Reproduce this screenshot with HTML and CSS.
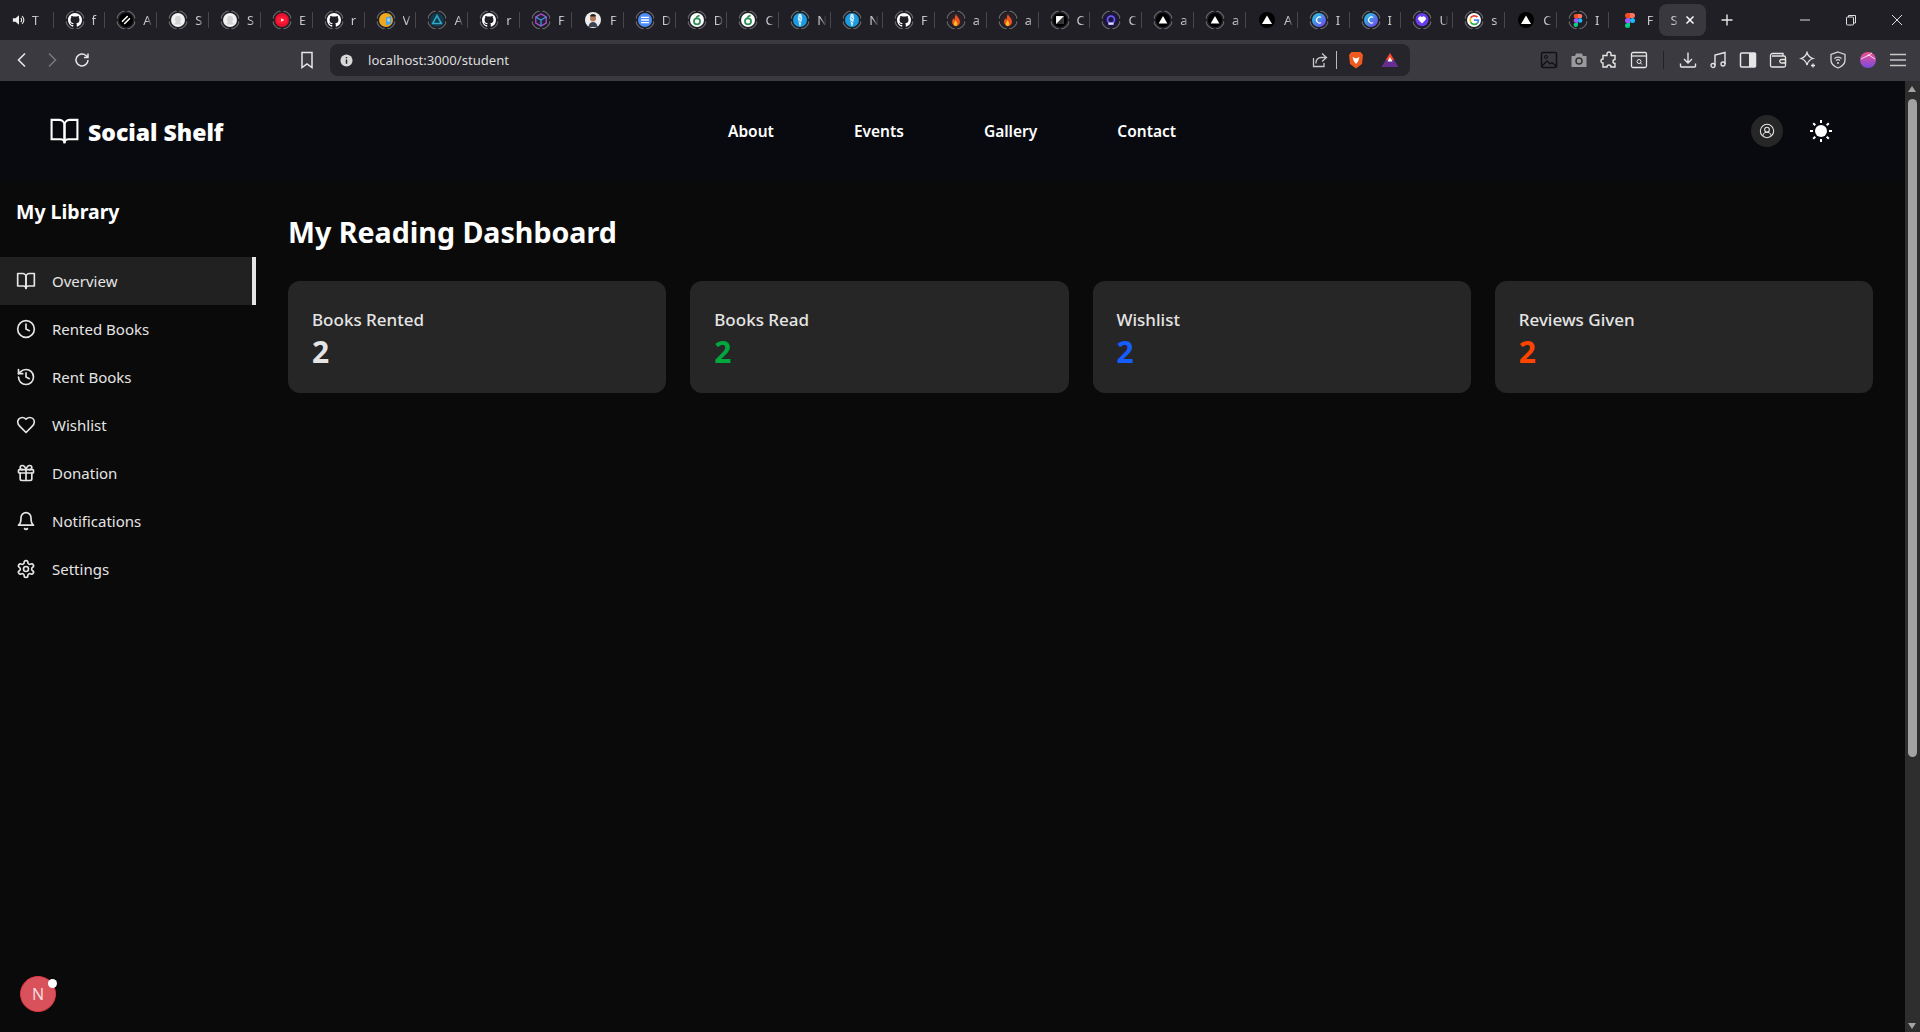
FILE: index.html
```html
<!DOCTYPE html>
<html>
<head>
  <title>Social Shelf</title>
  <link rel="stylesheet" href="styles.css">
</head>
<body>
  <svg class="defs" width="0" height="0">
    <symbol id="fav-github" viewBox="0 0 16 16"><path fill="#fff" d="M8 0C3.58 0 0 3.58 0 8c0 3.54 2.29 6.53 5.47 7.59.4.07.55-.17.55-.38 0-.19-.01-.82-.01-1.49-2.01.37-2.53-.49-2.69-.94-.09-.23-.48-.94-.82-1.13-.28-.15-.68-.52-.01-.53.63-.01 1.08.58 1.23.82.72 1.21 1.87.87 2.33.66.07-.52.28-.87.51-1.07-1.78-.2-3.64-.89-3.64-3.95 0-.87.31-1.59.82-2.15-.08-.2-.36-1.02.08-2.12 0 0 .67-.21 2.2.82.64-.18 1.32-.27 2-.27.68 0 1.36.09 2 .27 1.53-1.04 2.2-.82 2.2-.82.44 1.1.16 1.92.08 2.12.51.56.82 1.27.82 2.15 0 3.07-1.87 3.75-3.65 3.95.29.25.54.73.54 1.48 0 1.07-.01 1.93-.01 2.2 0 .21.15.46.55.38A8.013 8.013 0 0 0 16 8c0-4.42-3.58-8-8-8z"/></symbol>
    <symbol id="fav-slash" viewBox="0 0 16 16"><circle cx="8" cy="8" r="8" fill="#000"/><path d="M4 9.500 9.500 4M6.500 12 12 6.500" stroke="#fff" stroke-width="1.800" stroke-linecap="round"/></symbol>
    <symbol id="fav-grey" viewBox="0 0 16 16"><circle cx="8" cy="8" r="8" fill="#f1f1f1"/><circle cx="8" cy="7" r="3.500" fill="#d4d4d4"/><path d="M4 13a4 3 0 0 1 8 0z" fill="#d4d4d4"/></symbol>
    <symbol id="fav-youtube" viewBox="0 0 16 16"><circle cx="8" cy="8" r="8" fill="#e8112d"/><rect x="2.500" y="4" width="11" height="8" rx="2" fill="#ff1a35"/><path d="M7 6v4l3.500-2z" fill="#fff"/></symbol>
    <symbol id="fav-book" viewBox="0 0 16 16"><circle cx="8" cy="8" r="8" fill="#f0a91d"/><path d="M8 5l6-1.500v9L8 14z" fill="#4aa5e0"/><path d="M9.500 7h3M9.500 9h3" stroke="#fff"/></symbol>
    <symbol id="fav-teal" viewBox="0 0 16 16"><circle cx="8" cy="8" r="8" fill="#123a4a"/><path d="M8 3 13 12H3z" fill="none" stroke="#2fa8c8" stroke-width="1.800"/></symbol>
    <symbol id="fav-cube" viewBox="0 0 16 16"><path d="M8 1l6 3.500v7L8 15l-6-3.500v-7z" fill="#2a1f3a" stroke="#b04fd0" stroke-width="1.400"/><path d="M8 8l6-3.500M8 8v7M8 8 2 4.500" stroke="#37a0e0" stroke-width="1.400"/></symbol>
    <symbol id="fav-person" viewBox="0 0 16 16"><circle cx="8" cy="8" r="8" fill="#eee"/><circle cx="8" cy="6.500" r="3" fill="#b5795a"/><path d="M5 4.500a3 2.500 0 0 1 6 0z" fill="#2a1d18"/><path d="M3.500 15a4.500 5 0 0 1 9 0z" fill="#3b4252"/></symbol>
    <symbol id="fav-docs" viewBox="0 0 16 16"><circle cx="8" cy="8" r="8" fill="#4d8df5"/><path d="M3.500 5h9M3.500 8h9M3.500 11h9" stroke="#fff" stroke-width="1.600"/></symbol>
    <symbol id="fav-green" viewBox="0 0 16 16"><circle cx="8" cy="8" r="8" fill="#fff"/><circle cx="8" cy="9.500" r="3.500" fill="none" stroke="#2f8f55" stroke-width="2"/><path d="M7 5.500c1-2 2.500-2.500 4-2.500" fill="none" stroke="#2f8f55" stroke-width="1.800"/></symbol>
    <symbol id="fav-blue" viewBox="0 0 16 16"><circle cx="8" cy="8" r="8" fill="#1b9be0"/><path d="M6.500 1h3l1 5-2 9h-1l-2-9z" fill="#cfeafa"/><path d="M7 5l2 2M7 9l2 2" stroke="#1b9be0"/></symbol>
    <symbol id="fav-fire" viewBox="0 0 16 16"><circle cx="8" cy="8" r="8" fill="#2a2228"/><path d="M8 1c.5 3 4.500 4.500 4.500 9a4.500 5 0 0 1-9 0c0-2 1-3 2-4 .2 1 .6 1.500 1 1.700C6.500 5 7 3 8 1z" fill="#f0541e"/><path d="M7 8c.3 1.500 2.500 2 2.500 4a2 2.500 0 0 1-4 .5C5.500 11 6.500 10 7 8z" fill="#fbbf24"/></symbol>
    <symbol id="fav-square" viewBox="0 0 16 16"><circle cx="8" cy="8" r="8" fill="#000"/><rect x="3.500" y="3.500" width="9" height="9" fill="#fff"/><path d="M3.500 12.500l9-9v9z" fill="#333"/></symbol>
    <symbol id="fav-cpurple" viewBox="0 0 16 16"><circle cx="8" cy="8" r="8" fill="#1c1444"/><circle cx="8" cy="7.500" r="4" fill="none" stroke="#6a5cf0" stroke-width="2"/><rect x="5" y="11" width="6" height="2.500" fill="#e4e0ff"/></symbol>
    <symbol id="fav-tri" viewBox="0 0 16 16"><circle cx="8" cy="8" r="8" fill="#000"/><path d="M8 3.500 13 12H3z" fill="#fff"/></symbol>
    <symbol id="fav-cblue" viewBox="0 0 16 16"><defs><linearGradient id="cb" x1="0" y1="0" x2="1" y2="1"><stop offset="0" stop-color="#1fd1e0"/><stop offset="1" stop-color="#7a3cf0"/></linearGradient></defs><circle cx="8" cy="8" r="8" fill="url(#cb)"/><path d="M10.500 5a3.500 3.500 0 1 0 0 6" fill="none" stroke="#fff" stroke-width="1.300"/></symbol>
    <symbol id="fav-heart" viewBox="0 0 16 16"><circle cx="8" cy="7.500" r="7.500" fill="#6a3cf0"/><path d="M8 12 3.800 7.800a2.600 2.600 0 0 1 4.200-3 2.600 2.600 0 0 1 4.200 3z" fill="#fff"/></symbol>
    <symbol id="fav-google" viewBox="0 0 16 16"><circle cx="8" cy="8" r="8" fill="#fff"/><path d="M12 4.800A5 5 0 0 0 4.200 5.500" fill="none" stroke="#ea4335" stroke-width="2"/><path d="M4.200 5.500a5 5 0 0 0 0 5" fill="none" stroke="#fbbc05" stroke-width="2"/><path d="M4.200 10.500A5 5 0 0 0 12 11.500" fill="none" stroke="#34a853" stroke-width="2"/><path d="M12 11.500A5 5 0 0 0 13 8H8" fill="none" stroke="#4285f4" stroke-width="2"/></symbol>
    <symbol id="fav-figma" viewBox="0 0 16 16"><path d="M5.500 1H8v5H5.500a2.500 2.500 0 0 1 0-5z" fill="#f24e1e"/><path d="M8 1h2.500a2.500 2.500 0 0 1 0 5H8z" fill="#ff7262"/><path d="M5.500 6H8v5H5.500a2.500 2.500 0 0 1 0-5z" fill="#a259ff"/><circle cx="10.500" cy="8.500" r="2.500" fill="#1abcfe"/><path d="M5.500 11H8v2.500a2.500 2.500 0 1 1-2.500-2.500z" fill="#0acf83"/></symbol>
  </svg>

  <div class="tab-strip">
    <div class="tab tab-first">
      <svg class="speaker" viewBox="0 0 16 16"><path d="M1 6h3l4-3.500v11L4 10H1z" fill="#eee"/><path d="M10 5.500a3.500 3.500 0 0 1 0 5M11.500 3.500a6 6 0 0 1 0 9" fill="none" stroke="#eee" stroke-width="1.300"/></svg>
      <span class="tab-title">T</span>
    </div>
    <div class="tab"><span class="ring"><svg><use href="#fav-github"/></svg></span><span class="tab-title">f</span></div>
    <div class="tab"><span class="ring"><svg><use href="#fav-slash"/></svg></span><span class="tab-title">A</span></div>
    <div class="tab"><span class="ring"><svg><use href="#fav-grey"/></svg></span><span class="tab-title">S</span></div>
    <div class="tab"><span class="ring"><svg><use href="#fav-grey"/></svg></span><span class="tab-title">S</span></div>
    <div class="tab"><span class="ring"><svg><use href="#fav-youtube"/></svg></span><span class="tab-title">E</span></div>
    <div class="tab"><span class="ring"><svg><use href="#fav-github"/></svg></span><span class="tab-title">r</span></div>
    <div class="tab"><span class="ring"><svg><use href="#fav-book"/></svg></span><span class="tab-title">V</span></div>
    <div class="tab"><span class="ring"><svg><use href="#fav-teal"/></svg></span><span class="tab-title">A</span></div>
    <div class="tab"><span class="ring"><svg><use href="#fav-github"/></svg></span><span class="tab-title">r</span></div>
    <div class="tab"><span class="ring"><svg><use href="#fav-cube"/></svg></span><span class="tab-title">F</span></div>
    <div class="tab"><span class="no-ring"><svg><use href="#fav-person"/></svg></span><span class="tab-title">F</span></div>
    <div class="tab"><span class="ring"><svg><use href="#fav-docs"/></svg></span><span class="tab-title">D</span></div>
    <div class="tab"><span class="ring"><svg><use href="#fav-green"/></svg></span><span class="tab-title">D</span></div>
    <div class="tab"><span class="ring"><svg><use href="#fav-green"/></svg></span><span class="tab-title">C</span></div>
    <div class="tab"><span class="ring"><svg><use href="#fav-blue"/></svg></span><span class="tab-title">N</span></div>
    <div class="tab"><span class="ring"><svg><use href="#fav-blue"/></svg></span><span class="tab-title">N</span></div>
    <div class="tab"><span class="ring"><svg><use href="#fav-github"/></svg></span><span class="tab-title">F</span></div>
    <div class="tab"><span class="ring"><svg><use href="#fav-fire"/></svg></span><span class="tab-title">a</span></div>
    <div class="tab"><span class="ring"><svg><use href="#fav-fire"/></svg></span><span class="tab-title">a</span></div>
    <div class="tab"><span class="ring"><svg><use href="#fav-square"/></svg></span><span class="tab-title">C</span></div>
    <div class="tab"><span class="ring"><svg><use href="#fav-cpurple"/></svg></span><span class="tab-title">C</span></div>
    <div class="tab"><span class="ring"><svg><use href="#fav-tri"/></svg></span><span class="tab-title">a</span></div>
    <div class="tab"><span class="ring"><svg><use href="#fav-tri"/></svg></span><span class="tab-title">a</span></div>
    <div class="tab"><span class="no-ring"><svg><use href="#fav-tri"/></svg></span><span class="tab-title">A</span></div>
    <div class="tab"><span class="ring"><svg><use href="#fav-cblue"/></svg></span><span class="tab-title">I</span></div>
    <div class="tab"><span class="ring"><svg><use href="#fav-cblue"/></svg></span><span class="tab-title">I</span></div>
    <div class="tab"><span class="ring"><svg><use href="#fav-heart"/></svg></span><span class="tab-title">U</span></div>
    <div class="tab"><span class="ring"><svg><use href="#fav-google"/></svg></span><span class="tab-title">s</span></div>
    <div class="tab"><span class="no-ring"><svg><use href="#fav-tri"/></svg></span><span class="tab-title">C</span></div>
    <div class="tab"><span class="ring"><svg><use href="#fav-figma"/></svg></span><span class="tab-title">I</span></div>
    <div class="tab tab-last"><span class="no-ring"><svg><use href="#fav-figma"/></svg></span><span class="tab-title">F</span></div>
    <div class="tab-active">
      <span class="tab-title">S</span>
      <svg class="tab-close" viewBox="0 0 10 10"><path d="M1.500 1.500l7 7M8.500 1.500l-7 7" stroke="#fff" stroke-width="1.500"/></svg>
    </div>
    <svg class="tab-new" viewBox="0 0 12 12"><path d="M6 .5v11M.5 6h11" stroke="#e8e8e8" stroke-width="1.400"/></svg>
    <div class="win-controls">
      <svg viewBox="0 0 12 12"><path d="M1 6h10" stroke="#ddd"/></svg>
      <svg viewBox="0 0 12 12"><rect x="1.500" y="3" width="7" height="8" rx="1" fill="none" stroke="#ddd"/><path d="M3.500 3V1.500h7V9H8.500" fill="none" stroke="#ddd"/></svg>
      <svg viewBox="0 0 12 12"><path d="M1 1l10 10M11 1 1 11" stroke="#ddd"/></svg>
    </div>
  </div>

  <div class="toolbar">
    <div class="nav-buttons">
      <svg viewBox="0 0 16 16"><path d="M11 1.500 4.500 8l6.500 6.500" fill="none" stroke="#e6e6e6" stroke-width="1.600"/></svg>
      <svg viewBox="0 0 16 16"><path d="M5 1.500 11.500 8 5 14.500" fill="none" stroke="#77777c" stroke-width="1.600"/></svg>
      <svg viewBox="0 0 16 16"><path d="M14 8a6 6 0 1 1-2-4.500L14 5.500M14 1.500v4h-4" fill="none" stroke="#e6e6e6" stroke-width="1.500"/></svg>
    </div>
    <svg class="bookmark" viewBox="0 0 14 18"><path d="M2 1.500h10v15l-5-3.500-5 3.500z" fill="none" stroke="#e6e6e6" stroke-width="1.500"/></svg>
    <div class="address-bar">
      <svg class="info" viewBox="0 0 14 14"><circle cx="7" cy="7" r="6.500" fill="#d8d8d8"/><path d="M7 6v4.500M7 3.200v1.500" stroke="#25252b" stroke-width="1.600"/></svg>
      <span class="url">localhost:3000/student</span>
      <svg class="share" viewBox="0 0 18 18"><path d="M11 2.500l4.500 4-4.500 4M15 6.500H10a5 5 0 0 0-5 5v1M13 12v3.500H2.500V7" fill="none" stroke="#c8c8c8" stroke-width="1.300"/></svg>
      <span class="addr-sep"></span>
      <svg class="brave" viewBox="0 0 16 18"><path d="M3.500 1h9L15 4l-1 9-6 4.500L2 13 1 4z" fill="#f0591e"/><path d="M4.500 6 8 7.500 11.500 6 10 10.500 8 13l-2-2.500z" fill="#fff"/></svg>
      <svg class="bat" viewBox="0 0 18 16"><path d="M9 1l8.500 14H.5z" fill="#662d91"/><path d="M9 1l4.200 7H4.800z" fill="#ff4724"/><path d="M9 5l2.500 4.500h-5z" fill="#fff"/></svg>
    </div>
    <div class="tool-icons">
      <svg viewBox="0 0 18 18"><rect x="1.500" y="1.500" width="15" height="15" rx="1.500" fill="none" stroke="#111" stroke-width="1.500"/><circle cx="6" cy="6" r="1.500" fill="none" stroke="#111"/><path d="M2 15l5-5 3 3 2-1.500 4 3.500" fill="none" stroke="#111" stroke-width="1.300"/></svg>
      <svg viewBox="0 0 18 18"><path d="M1.500 5h3.500l1-2.500h6l1 2.500h3.500v11h-15z" fill="#9a9a9e"/><circle cx="9" cy="10" r="3" fill="none" stroke="#333" stroke-width="1.500"/></svg>
      <svg viewBox="0 0 18 18"><path d="M7 3a2 2 0 0 1 4 0v1.500h4v4a2 2 0 0 0 0 4v3.500h-4a2 2 0 0 0-4 0H3v-4a2 2 0 0 1 0-4V4.500h4z" fill="none" stroke="#e6e6e6" stroke-width="1.400"/></svg>
      <svg viewBox="0 0 18 18"><rect x="1.500" y="1.500" width="15" height="15" rx="1.500" fill="none" stroke="#e6e6e6" stroke-width="1.300"/><path d="M1.500 5h15" stroke="#e6e6e6" stroke-width="1.300"/><circle cx="9" cy="10.500" r="2" fill="none" stroke="#e6e6e6"/><path d="M10.500 12l1.500 1.500" stroke="#e6e6e6"/></svg>
      <span class="tool-sep"></span>
      <svg viewBox="0 0 18 18"><path d="M9 1.500v10M5 8l4 4 4-4M1.500 12.500v2.500a1 1 0 0 0 1 1h13a1 1 0 0 0 1-1v-2.500" fill="none" stroke="#e6e6e6" stroke-width="1.400"/></svg>
      <svg viewBox="0 0 18 18"><path d="M6 14.500V4l10-2.500V13" fill="none" stroke="#e6e6e6" stroke-width="1.400"/><circle cx="4" cy="14.500" r="2" fill="none" stroke="#e6e6e6" stroke-width="1.300"/><circle cx="14" cy="13" r="2" fill="none" stroke="#e6e6e6" stroke-width="1.300"/></svg>
      <svg viewBox="0 0 18 18"><rect x="1.500" y="2" width="15" height="14" rx="1" fill="none" stroke="#e6e6e6" stroke-width="1.500"/><rect x="10" y="2" width="6.500" height="14" fill="#e6e6e6"/></svg>
      <svg viewBox="0 0 18 18"><path d="M3 5h12a1.500 1.500 0 0 1 1.500 1.500v8A1.500 1.500 0 0 1 15 16H3a1.500 1.500 0 0 1-1.500-1.500v-10A2 2 0 0 1 3.500 2.500H14v2.500" fill="none" stroke="#e6e6e6" stroke-width="1.300"/><path d="M12.500 8.500h4v3.500h-4a1.700 1.700 0 0 1 0-3.500z" fill="none" stroke="#e6e6e6" stroke-width="1.300"/></svg>
      <svg viewBox="0 0 18 18"><path d="M8 1.500c1 3.500 2.500 5 6 6-3.500 1-5 2.500-6 6.500-1-4-2.500-5.500-6-6.500 3.500-1 5-2.500 6-6z" fill="none" stroke="#e6e6e6" stroke-width="1.300"/><path d="M14 12.500v4M12 14.500h4" stroke="#e6e6e6" stroke-width="1.300"/></svg>
      <svg viewBox="0 0 18 18"><path d="M9 1l7 2.500V9c0 4-3 6.500-7 8-4-1.500-7-4-7-8V3.500z" fill="none" stroke="#d8d8d8" stroke-width="1.300"/><path d="M5.500 7.500a5 5 0 0 1 7 0M7 9.500a3 3 0 0 1 4 0" fill="none" stroke="#d8d8d8" stroke-width="1.200"/><circle cx="9" cy="12" r="1" fill="#d8d8d8"/></svg>
      <svg viewBox="0 0 18 18"><defs><linearGradient id="gem" x1="0" y1="0" x2="0" y2="1"><stop offset="0" stop-color="#f0508c"/><stop offset="1" stop-color="#7a4ae0"/></linearGradient></defs><circle cx="9" cy="9" r="8" fill="url(#gem)"/><path d="M2 8l8-4 6 4M8 5l5-3" fill="none" stroke="#fff" stroke-width=".8"/></svg>
      <svg viewBox="0 0 18 18"><path d="M1 3.500h16M1 9h16M1 14.500h16" stroke="#c8c8c8" stroke-width="1.600"/></svg>
    </div>
  </div>

  <div class="viewport">
    <div class="page">
      <header class="site-header">
        <a class="logo">
          <svg class="logo-icon" viewBox="0 0 24 24"><path d="M2 3h6a4 4 0 0 1 4 4v14a3 3 0 0 0-3-3H2z"/><path d="M22 3h-6a4 4 0 0 0-4 4v14a3 3 0 0 1 3-3h7z"/></svg>
          <span class="logo-text">Social Shelf</span>
        </a>
        <nav class="site-nav">
          <a>About</a>
          <a>Events</a>
          <a>Gallery</a>
          <a>Contact</a>
        </nav>
        <div class="header-actions">
          <span class="profile-btn">
            <svg viewBox="0 0 24 24"><circle cx="12" cy="12" r="10"/><circle cx="12" cy="10" r="3.500"/><path d="M6 19a6 5 0 0 1 12 0"/></svg>
          </span>
          <svg class="sun" viewBox="0 0 24 24"><circle cx="12" cy="12" r="6" fill="#fff" stroke="none"/><path d="M12 1v3M12 20v3M1 12h3M20 12h3M4.200 4.200l2.100 2.100M17.700 17.700l2.100 2.100M4.200 19.800l2.100-2.100M17.700 6.300l2.100-2.100"/></svg>
        </div>
      </header>

      <div class="content">
        <aside class="sidebar">
          <h2 class="sidebar-title">My Library</h2>
          <ul class="side-menu">
            <li class="active">
              <svg viewBox="0 0 24 24"><path d="M2 3h6a4 4 0 0 1 4 4v14a3 3 0 0 0-3-3H2z"/><path d="M22 3h-6a4 4 0 0 0-4 4v14a3 3 0 0 1 3-3h7z"/></svg>
              Overview
            </li>
            <li>
              <svg viewBox="0 0 24 24"><circle cx="12" cy="12" r="10"/><path d="M12 6v6l4 2"/></svg>
              Rented Books
            </li>
            <li>
              <svg viewBox="0 0 24 24"><path d="M3 12a9 9 0 1 0 9-9 9.750 9.750 0 0 0-6.740 2.740L3 8"/><path d="M3 3v5h5"/><path d="M12 7v5l4 2"/></svg>
              Rent Books
            </li>
            <li>
              <svg viewBox="0 0 24 24"><path d="M19 14c1.490-1.460 3-3.210 3-5.500A5.500 5.500 0 0 0 16.500 3c-1.760 0-3 .5-4.500 2-1.500-1.500-2.740-2-4.500-2A5.500 5.500 0 0 0 2 8.500c0 2.300 1.500 4.050 3 5.500l7 7Z"/></svg>
              Wishlist
            </li>
            <li>
              <svg viewBox="0 0 24 24"><rect x="3" y="8" width="18" height="4" rx="1"/><path d="M12 8v13"/><path d="M19 12v7a2 2 0 0 1-2 2H7a2 2 0 0 1-2-2v-7"/><path d="M7.500 8a2.500 2.500 0 0 1 0-5A4.800 8 0 0 1 12 8a4.800 8 0 0 1 4.500-5 2.500 2.500 0 0 1 0 5"/></svg>
              Donation
            </li>
            <li>
              <svg viewBox="0 0 24 24"><path d="M6 8a6 6 0 0 1 12 0c0 7 3 9 3 9H3s3-2 3-9"/><path d="M10.300 21a1.940 1.940 0 0 0 3.400 0"/></svg>
              Notifications
            </li>
            <li>
              <svg viewBox="0 0 24 24"><path d="M12.220 2h-.44a2 2 0 0 0-2 2v.18a2 2 0 0 1-1 1.730l-.43.25a2 2 0 0 1-2 0l-.15-.08a2 2 0 0 0-2.730.73l-.22.38a2 2 0 0 0 .73 2.730l.15.1a2 2 0 0 1 1 1.720v.51a2 2 0 0 1-1 1.740l-.15.09a2 2 0 0 0-.73 2.730l.22.38a2 2 0 0 0 2.730.73l.15-.08a2 2 0 0 1 2 0l.43.25a2 2 0 0 1 1 1.730V20a2 2 0 0 0 2 2h.44a2 2 0 0 0 2-2v-.18a2 2 0 0 1 1-1.730l.43-.25a2 2 0 0 1 2 0l.15.08a2 2 0 0 0 2.730-.73l.22-.39a2 2 0 0 0-.73-2.730l-.15-.08a2 2 0 0 1-1-1.740v-.5a2 2 0 0 1 1-1.740l.15-.09a2 2 0 0 0 .73-2.730l-.22-.38a2 2 0 0 0-2.730-.73l-.15.08a2 2 0 0 1-2 0l-.43-.25a2 2 0 0 1-1-1.730V4a2 2 0 0 0-2-2z"/><circle cx="12" cy="12" r="3"/></svg>
              Settings
            </li>
          </ul>
        </aside>

        <main class="dashboard">
          <h1>My Reading Dashboard</h1>
          <div class="stats">
            <div class="stat-card">
              <div class="stat-label">Books Rented</div>
              <div class="stat-value">2</div>
            </div>
            <div class="stat-card">
              <div class="stat-label">Books Read</div>
              <div class="stat-value green">2</div>
            </div>
            <div class="stat-card">
              <div class="stat-label">Wishlist</div>
              <div class="stat-value blue">2</div>
            </div>
            <div class="stat-card">
              <div class="stat-label">Reviews Given</div>
              <div class="stat-value orange">2</div>
            </div>
          </div>
        </main>
      </div>

      <div class="dev-badge">N<span class="dev-dot"></span></div>
    </div>

    <div class="scrollbar">
      <span class="arrow-up"></span>
      <span class="thumb"></span>
      <span class="arrow-down"></span>
    </div>
  </div>
</body>
</html>
```

FILE: styles.css
```css
* {
  box-sizing: border-box;
}

html, body {
  height: 100%;
}

body {
  margin: 0;
  display: flex;
  flex-direction: column;
  overflow: hidden;
  background-color: #0a0a0a;
  color: #e5e5e5;
  font-family: "Noto Sans", "Open Sans", sans-serif;
}

.defs {
  display: block;
  height: 0;
}

/* browser chrome */
.tab-strip {
  height: 40px;
  flex: none;
  display: flex;
  align-items: center;
  background-color: #1f1f25;
}

.tab {
  width: 51.85px;
  height: 16px;
  flex: none;
  display: flex;
  align-items: center;
  gap: 7px;
  padding-left: 11px;
  border-right: 1px solid #46464c;
}

.tab-first {
  width: 53.5px;
  gap: 6px;
  padding-left: 12px;
}

.tab-last {
  width: 50px;
  border-right: none;
}

.ring, .no-ring {
  position: relative;
  width: 20px;
  height: 20px;
  flex: none;
  display: flex;
  align-items: center;
  justify-content: center;
}

/* broken circle round a tab that is still loading */
.ring::before {
  content: "";
  position: absolute;
  inset: 0;
  border-radius: 50%;
  background: repeating-conic-gradient(from 9deg, #616166 0 72deg, transparent 72deg 90deg);
  -webkit-mask: radial-gradient(closest-side, transparent calc(100% - 1.8px), #000 calc(100% - 1.2px));
  mask: radial-gradient(closest-side, transparent calc(100% - 1.8px), #000 calc(100% - 1.2px));
}

.ring svg {
  width: 14px;
  height: 14px;
}

.no-ring svg {
  width: 16px;
  height: 16px;
}

.speaker {
  width: 14px;
  height: 14px;
  flex: none;
}

.tab-title {
  width: 11px;
  font-size: 13px;
  line-height: 16px;
  color: #c8c8cc;
  -webkit-mask-image: linear-gradient(90deg, #000 35%, transparent 85%);
  mask-image: linear-gradient(90deg, #000 35%, transparent 85%);
}

.tab-active {
  width: 47px;
  height: 32px;
  flex: none;
  display: flex;
  align-items: center;
  gap: 4px;
  margin-left: 0.6px;
  padding-left: 11px;
  border-radius: 8px;
  background-color: #38383e;
}

.tab-close {
  width: 10px;
  height: 10px;
}

.tab-new {
  width: 12px;
  height: 12px;
  flex: none;
  margin-left: 15px;
}

.win-controls {
  display: flex;
  align-items: center;
  gap: 34px;
  margin-left: auto;
  padding-right: 17px;
}

.win-controls svg {
  width: 12px;
  height: 12px;
}

.toolbar {
  height: 41px;
  flex: none;
  display: flex;
  align-items: center;
  padding-bottom: 1px;
  background-color: #3a3a40;
}

.nav-buttons {
  display: flex;
  gap: 14px;
  padding-left: 14px;
}

.nav-buttons svg {
  width: 16px;
  height: 16px;
}

.bookmark {
  width: 14px;
  height: 18px;
  margin-left: 210px;
}

.address-bar {
  width: 1080px;
  height: 32px;
  display: flex;
  align-items: center;
  margin-left: 16px;
  padding-left: 10px;
  border-radius: 8px;
  background-color: #25252b;
}

.info {
  width: 13px;
  height: 13px;
}

.url {
  margin-left: 15px;
  font-size: 13.1px;
  color: #ddd;
}

.share {
  width: 18px;
  height: 18px;
  margin-left: auto;
}

.addr-sep {
  width: 1px;
  height: 18px;
  margin-left: 7px;
  background-color: #bbb;
}

.brave {
  width: 16px;
  height: 18px;
  margin-left: 11px;
}

.bat {
  width: 18px;
  height: 16px;
  margin-left: 17px;
  margin-right: 11px;
}

.tool-icons {
  display: flex;
  align-items: center;
  gap: 12px;
  margin-left: 130px;
}

.tool-icons svg {
  width: 18px;
  height: 18px;
  flex: none;
}

.tool-sep {
  width: 1px;
  height: 18px;
  margin: 0 3px;
  background-color: #222;
}

/* page */
.viewport {
  flex: 1;
  min-height: 0;
  display: flex;
}

.page {
  position: relative;
  flex: 1;
  min-width: 0;
}

.site-header {
  height: 100px;
  display: flex;
  align-items: center;
  padding: 0 72px 0 49px;
  background-color: #090a0f;
}

.logo {
  display: flex;
  align-items: center;
  gap: 8px;
  width: 679px;
  font-size: 23px;
  font-weight: 900;
  color: #fff;
}

.logo-icon {
  width: 31px;
  height: 31px;
  fill: none;
  stroke: #fff;
  stroke-width: 1.6;
}

.logo-text {
  padding-top: 2px;
}

.site-nav {
  display: flex;
  gap: 80px;
  font-size: 15.5px;
  font-weight: 600;
  color: #fff;
}

.header-actions {
  display: flex;
  align-items: center;
  gap: 26px;
  margin-left: auto;
}

.profile-btn {
  width: 32px;
  height: 32px;
  display: flex;
  align-items: center;
  justify-content: center;
  border-radius: 50%;
  background-color: #262626;
}

.profile-btn svg {
  width: 16px;
  height: 16px;
  fill: none;
  stroke: #e5e5e5;
  stroke-width: 1.6;
}

.sun {
  width: 24px;
  height: 24px;
  fill: none;
  stroke: #fff;
  stroke-width: 2;
}

.content {
  display: flex;
}

.sidebar {
  width: 256px;
  flex: none;
  padding-top: 16px;
}

.sidebar-title {
  margin: 0 0 30px;
  padding-left: 16px;
  font-size: 19.5px;
  line-height: 30px;
  font-weight: 700;
  color: #fff;
}

.side-menu {
  margin: 0;
  padding: 0;
  list-style: none;
}

.side-menu li {
  height: 48px;
  display: flex;
  align-items: center;
  gap: 16px;
  padding-left: 16px;
  font-size: 15px;
}

.side-menu li.active {
  background-color: #212121;
  border-right: 4px solid #e5e5e5;
}

.side-menu svg {
  width: 20px;
  height: 20px;
  flex: none;
  fill: none;
  stroke: #e5e5e5;
  stroke-width: 2;
  stroke-linecap: round;
  stroke-linejoin: round;
}

.dashboard {
  flex: 1;
  min-width: 0;
  padding: 32px;
}

.dashboard h1 {
  margin: 0 0 30px;
  font-size: 28.6px;
  line-height: 38px;
  font-weight: 700;
  color: #fff;
}

.stats {
  display: grid;
  grid-template-columns: repeat(4, 1fr);
  gap: 24px;
}

.stat-card {
  height: 112px;
  padding: 25px 24px 0;
  border-radius: 12px;
  background-color: #262626;
}

.stat-label {
  font-size: 17px;
  line-height: 28px;
  font-weight: 500;
  color: #e5e5e5;
}

.stat-value {
  font-size: 30px;
  line-height: 36px;
  font-weight: 700;
}

.green {
  color: #00a63e;
}

.blue {
  color: #155dfc;
}

.orange {
  color: #ff4400;
}

.dev-badge {
  position: absolute;
  left: 20px;
  bottom: 20px;
  width: 36px;
  height: 36px;
  display: flex;
  align-items: center;
  justify-content: center;
  border: 1px solid #e03a44;
  border-radius: 50%;
  background-color: #d9515a;
  font-size: 16px;
  color: #f2dcdc;
}

.dev-dot {
  position: absolute;
  top: 1.5px;
  left: 26.5px;
  width: 9px;
  height: 9px;
  border-radius: 50%;
  background-color: #fff;
}

.scrollbar {
  position: relative;
  width: 15px;
  flex: none;
  background-color: #2e2e2e;
}

.arrow-up, .arrow-down {
  position: absolute;
  left: 3px;
  width: 0;
  height: 0;
  border-left: 4.5px solid transparent;
  border-right: 4.5px solid transparent;
}

.arrow-up {
  top: 5px;
  border-bottom: 6px solid #a3a3a3;
}

.arrow-down {
  bottom: 3px;
  border-top: 6px solid #a3a3a3;
}

.thumb {
  position: absolute;
  top: 18px;
  left: 3px;
  width: 9px;
  height: 658px;
  border-radius: 5px;
  background-color: #a3a3a3;
}
```
